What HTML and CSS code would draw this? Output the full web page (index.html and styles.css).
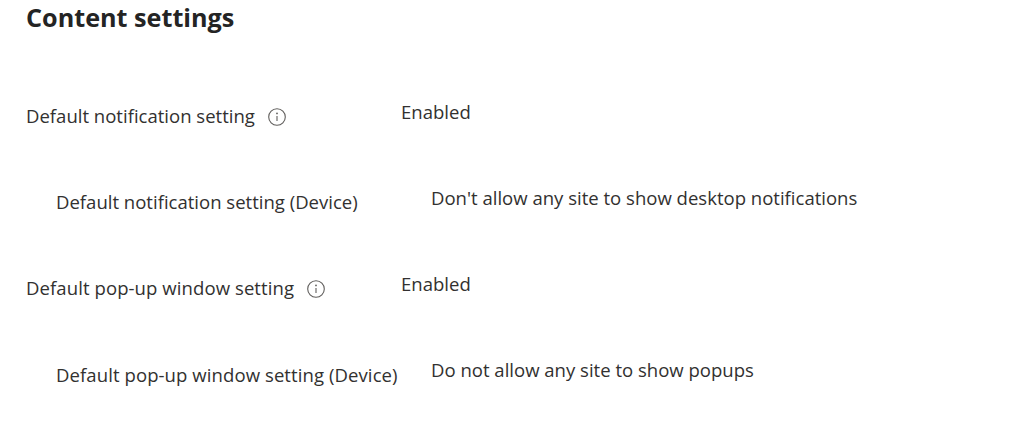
FILE: index.html
```html
<!DOCTYPE html>
<html lang="en">
<head>
<meta charset="utf-8">
<title>Content settings</title>
<link rel="stylesheet" href="styles.css">
</head>
<body>
<main class="page">
  <h1 class="title">Content settings</h1>
  <div class="rows">
    <div class="row">
      <div class="label">Default notification setting
        <svg class="info" viewBox="0 0 18 18" width="18" height="18"><circle cx="9" cy="9" r="8.3"/><path d="M9 8v5"/><circle class="dot" cx="9" cy="5.4" r=".9"/></svg>
      </div>
      <div class="value">Enabled</div>
    </div>
    <div class="row child">
      <div class="label">Default notification setting (Device)</div>
      <div class="value">Don't allow any site to show desktop notifications</div>
    </div>
    <div class="row">
      <div class="label popup">Default pop-up window setting
        <svg class="info" viewBox="0 0 18 18" width="18" height="18"><circle cx="9" cy="9" r="8.3"/><path d="M9 8v5"/><circle class="dot" cx="9" cy="5.4" r=".9"/></svg>
      </div>
      <div class="value">Enabled</div>
    </div>
    <div class="row child">
      <div class="label popup low">Default pop-up window setting (Device)</div>
      <div class="value">Do not allow any site to show popups</div>
    </div>
  </div>
</main>
</body>
</html>
```
FILE: styles.css
```css
html, body { margin: 0; padding: 0; background: #fff; }
body { font-family: "Open Sans", "Liberation Sans", sans-serif; color: #323130; overflow: hidden; }
.page { padding: 2px 0 0 26px; }
.title { margin: 0; font-size: 25.2px; line-height: 30px; font-weight: 700; color: #242424; }
.rows { margin-top: 64px; display: flex; flex-direction: column; gap: 50px; }
.row { display: grid; grid-template-columns: 375px 1fr; height: 36px; font-size: 18.55px; line-height: 24px; }
.row.child { padding-left: 30px; }
.label { padding-top: 8px; display: flex; align-items: center; height: 24px; gap: 13px; }
.popup { letter-spacing: 0.08px; }
.low { padding-top: 9px; }
.value { padding-top: 4px; }
.info { fill: none; stroke: #605e5c; stroke-width: 1.1; margin-top: 1px; }
.info .dot { fill: #605e5c; stroke: none; }
```
